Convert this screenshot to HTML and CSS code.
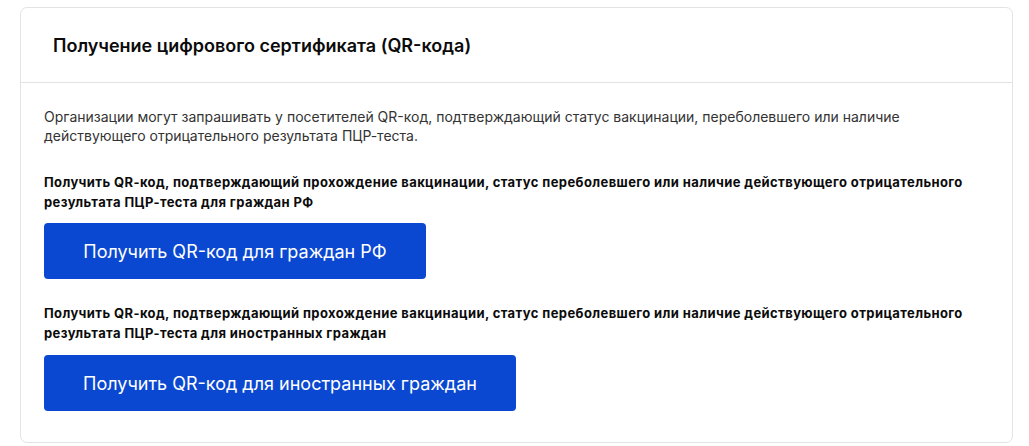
FILE: index.html
```html
<!DOCTYPE html>
<html lang="ru">
<head>
<meta charset="utf-8">
<link rel="stylesheet" href="styles.css">
</head>
<body>
<section class="card">
  <header class="card-head">
    <h2 class="title">Получение цифрового сертификата (QR-кода)</h2>
  </header>
  <div class="card-body">
    <p class="intro">Организации могут запрашивать у посетителей QR-код, подтверждающий статус вакцинации, переболевшего или наличие действующего отрицательного результата ПЦР-теста.</p>
    <p class="label">Получить QR-код, подтверждающий прохождение вакцинации, статус переболевшего или наличие действующего отрицательного результата ПЦР-теста для граждан РФ</p>
    <a class="btn btn-rf" href="#">Получить QR-код для граждан РФ</a>
    <p class="label label-2">Получить QR-код, подтверждающий прохождение вакцинации, статус переболевшего или наличие действующего отрицательного результата ПЦР-теста для иностранных граждан</p>
    <a class="btn btn-foreign" href="#">Получить QR-код для иностранных граждан</a>
  </div>
</section>
</body>
</html>
```

FILE: styles.css
```css
html, body {
  margin: 0;
  padding: 0;
}
body {
  background: #fff;
  font-family: Inter, "Noto Sans", sans-serif;
  color: #1a1a1a;
  padding: 7px 16px 3px 20px;
}
.card {
  background: #fff;
  border: 1px solid #e3e3e3;
  border-radius: 7px;
  height: 436px;
  box-sizing: border-box;
}
.card-head {
  height: 75px;
  box-sizing: border-box;
  border-bottom: 1px solid #e3e3e3;
  display: flex;
  align-items: center;
  padding-left: 32px;
}
.title {
  margin: 0;
  font-size: 18px;
  font-weight: 600;
  color: #0b0b0b;
}
.card-body {
  padding: 24px 24px 0 23px;
}
.intro {
  margin: 0;
  font-size: 14px;
  line-height: 19px;
  color: #333;
  max-width: 880px;
}
.label {
  margin: 27px 0 0;
  font-size: 13px;
  letter-spacing: 0.4px;
  font-weight: 700;
  line-height: 20px;
  color: #0b0b0b;
  max-width: 925px;
}
.label-2 {
  margin-top: 24px;
}
.btn {
  display: flex;
  align-items: center;
  justify-content: center;
  height: 56px;
  margin-top: 12px;
  background: #0b48d1;
  color: #fff;
  text-decoration: none;
  font-size: 18px;
  border-radius: 4px;
}
.btn-rf { width: 382px; margin-top: 11px; }
.btn-foreign { width: 472px; }
```
